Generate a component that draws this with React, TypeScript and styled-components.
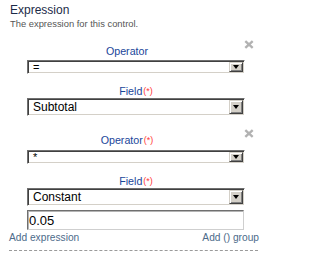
import React from "react";
import styled, {createGlobalStyle} from "styled-components";

const GlobalStyle = createGlobalStyle`
    body {
        margin: 0;
        background: #fff;
        font-family: "Liberation Sans", Arial, sans-serif;
    }
`;

const Page = styled.div`
    padding: 3px 0 0 10px;
    width: 266px;
    box-sizing: border-box;
`;

const Title = styled.div`
    font-size: 12px;
    line-height: 14px;
    color: #1c2b48;
`;

const Subtitle = styled.div`
    margin-top: 1px;
    font-size: 9.4px;
    line-height: 12px;
    color: #555;
`;

const Groups = styled.div`
    margin: 10px 0 0 17px;
    display: flex;
    flex-direction: column;
    gap: 13px;
`;

const Group = styled.div`
    width: 230px;
    display: flex;
    flex-direction: column;
`;

const Head = styled.div`
    display: flex;
    align-items: flex-start;
`;

const Label = styled.div<{ $width: number; $lh: number }>`
    width: ${p => p.$width}px;
    text-align: center;
    font-size: 10.7px;
    line-height: ${p => p.$lh}px;
    color: #1a469a;
`;

const HeadLabel = styled(Label)`
    margin-top: 5px;
`;

const FieldLabel = styled(Label)`
    margin-top: 11px;
`;

const Req = styled.span`
    font-size: 9px;
    color: #ff3838;
    margin-left: 1px;
    position: relative;
    top: -1px;
`;

const Remove = styled.svg`
    margin-left: auto;
    margin-right: 3px;
    cursor: pointer;
`;

const SelectBox = styled.div<{ $h: number; $fs: number; $mt: number }>`
    display: flex;
    align-items: stretch;
    box-sizing: border-box;
    width: 218px;
    height: ${p => p.$h}px;
    margin-top: ${p => p.$mt}px;
    padding: 1px;
    background: #fff;
    border: 1px solid;
    border-color: #707070 #ffffff #ffffff #707070;
    box-shadow: inset 1px 1px 0 #404040, inset -1px -1px 0 #d4d0c8;
    font-size: ${p => p.$fs}px;
    color: #000;
`;

const SelectValue = styled.div`
    flex: 1;
    display: flex;
    align-items: center;
    padding-left: 4px;
`;

const DropButton = styled.div`
    width: 14px;
    box-sizing: border-box;
    display: flex;
    align-items: center;
    justify-content: center;
    background: #d4d0c8;
    border: 1px solid;
    border-color: #d4d0c8 #404040 #404040 #d4d0c8;
    box-shadow: inset 1px 1px 0 #fff, inset -1px -1px 0 #808080;

    &::after {
        content: "";
        border-left: 3.5px solid transparent;
        border-right: 3.5px solid transparent;
        border-top: 4px solid #000;
    }
`;

const TextInput = styled.input`
    box-sizing: border-box;
    width: 217px;
    height: 20px;
    margin-top: 4px;
    padding: 0 0 0 1px;
    border: 1px solid;
    border-color: #6f6f6f #cfcfcf #cfcfcf #6f6f6f;
    box-shadow: inset 1px 1px 0 #b4b4b4;
    font-family: "Liberation Sans", Arial, sans-serif;
    font-size: 13px;
    color: #000;
    outline: none;
`;

const Links = styled.div`
    display: flex;
    justify-content: space-between;
    width: 250px;
    margin: 2px 0 0 -1px;
    font-size: 10.2px;
    line-height: 12px;
`;

const LinkText = styled.a`
    color: #4d6b8a;
    text-decoration: none;
    cursor: pointer;
`;

const Divider = styled.div`
    width: 249px;
    margin: 6px 0 0 -1px;
    border-top: 1px dashed #9a9a9a;
`;

function Select({value, h, fs, mt = 0}: { value: string; h: number; fs: number; mt?: number }) {
    return (
        <SelectBox $h={h} $fs={fs} $mt={mt}>
            <SelectValue>{value}</SelectValue>
            <DropButton/>
        </SelectBox>
    );
}

function RemoveIcon() {
    return (
        <Remove width="10" height="9" viewBox="0 0 10 9">
            <path d="M1.3 1.2 L8.7 7.8 M8.7 1.2 L1.3 7.8" stroke="#b2b2b2" strokeWidth="2.4"/>
        </Remove>
    );
}

interface Row {
    operator: string;
    operatorRequired: boolean;
    field: string;
    constant?: string;
}

const rows: Row[] = [
    {operator: "=", operatorRequired: false, field: "Subtotal"},
    {operator: "*", operatorRequired: true, field: "Constant", constant: "0.05"},
];

export default function App() {
    return (
        <Page>
            <GlobalStyle/>
            <Title>Expression</Title>
            <Subtitle>The expression for this control.</Subtitle>
            <Groups>
                {rows.map((row, i) => (
                    <Group key={i}>
                        <Head>
                            <HeadLabel $width={200} $lh={13}>
                                Operator{row.operatorRequired && <Req>(*)</Req>}
                            </HeadLabel>
                            <RemoveIcon/>
                        </Head>
                        <Select value={row.operator} h={14} fs={11} mt={2}/>
                        <FieldLabel $width={218} $lh={12}>
                            Field<Req>(*)</Req>
                        </FieldLabel>
                        <Select value={row.field} h={18} fs={12}/>
                        {row.constant !== undefined && <TextInput defaultValue={row.constant}/>}
                    </Group>
                ))}
            </Groups>
            <Links>
                <LinkText>Add expression</LinkText>
                <LinkText>Add () group</LinkText>
            </Links>
            <Divider/>
        </Page>
    );
}
